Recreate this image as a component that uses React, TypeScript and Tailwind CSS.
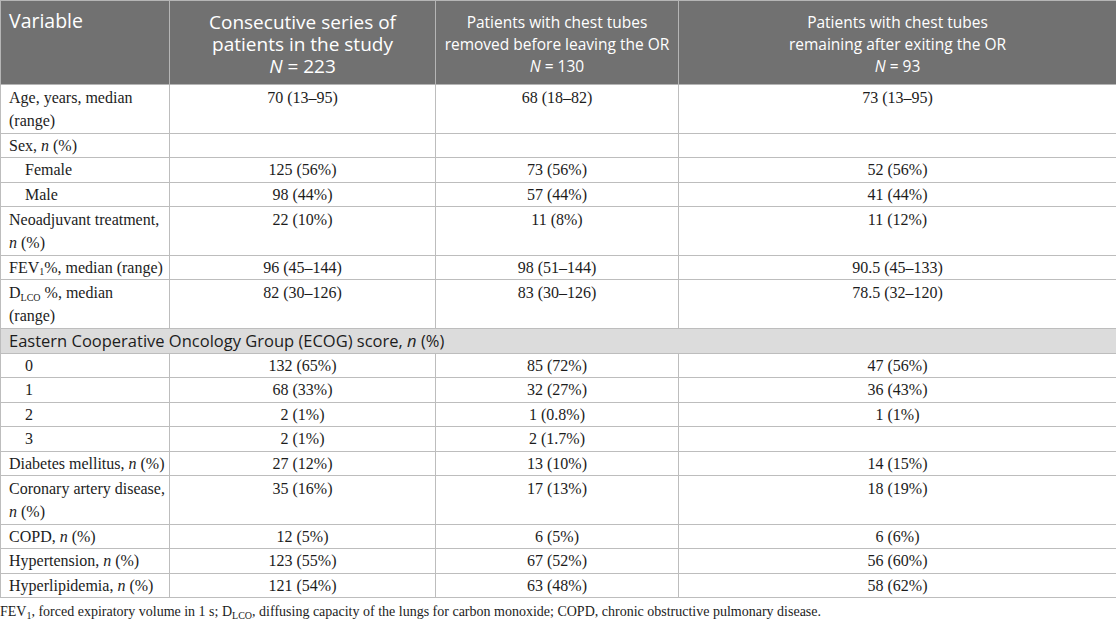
import React from "react";

type Row = {
  label: React.ReactNode;
  v: [string, string, string];
  indent?: boolean;
  double?: boolean;
};

const N = () => <i>n</i>;

const rows: Row[] = [
  { label: <>Age, years, median (range)</>, v: ["70 (13–95)", "68 (18–82)", "73 (13–95)"], double: true },
  { label: <>Sex, <N /> (%)</>, v: ["", "", ""] },
  { label: <>Female</>, v: ["125 (56%)", "73 (56%)", "52 (56%)"], indent: true },
  { label: <>Male</>, v: ["98 (44%)", "57 (44%)", "41 (44%)"], indent: true },
  { label: <>Neoadjuvant treatment, <N /> (%)</>, v: ["22 (10%)", "11 (8%)", "11 (12%)"], double: true },
  {
    label: (
      <>
        FEV<sub className="text-[10px]">1</sub>%, median (range)
      </>
    ),
    v: ["96 (45–144)", "98 (51–144)", "90.5 (45–133)"],
  },
  {
    label: (
      <>
        D<sub className="text-[10px]">LCO</sub> %, median
        <br />
        (range)
      </>
    ),
    v: ["82 (30–126)", "83 (30–126)", "78.5 (32–120)"],
    double: true,
  },
];

const rows2: Row[] = [
  { label: <>0</>, v: ["132 (65%)", "85 (72%)", "47 (56%)"], indent: true },
  { label: <>1</>, v: ["68 (33%)", "32 (27%)", "36 (43%)"], indent: true },
  { label: <>2</>, v: ["2 (1%)", "1 (0.8%)", "1 (1%)"], indent: true },
  { label: <>3</>, v: ["2 (1%)", "2 (1.7%)", ""], indent: true },
  { label: <>Diabetes mellitus, <N /> (%)</>, v: ["27 (12%)", "13 (10%)", "14 (15%)"] },
  { label: <>Coronary artery disease, <N /> (%)</>, v: ["35 (16%)", "17 (13%)", "18 (19%)"], double: true },
  { label: <>COPD, <N /> (%)</>, v: ["12 (5%)", "6 (5%)", "6 (6%)"] },
  { label: <>Hypertension, <N /> (%)</>, v: ["123 (55%)", "67 (52%)", "56 (60%)"] },
  { label: <>Hyperlipidemia, <N /> (%)</>, v: ["121 (54%)", "63 (48%)", "58 (62%)"] },
];

function BodyRow({ r }: { r: Row }) {
  const lead = r.double ? "leading-[23px]" : "leading-[22px]";
  return (
    <tr className={r.double ? "h-[48.7px]" : "h-[24.5px]"}>
      <td
        className={`border-[1.5px] border-[#bdbdbd] align-top pt-[1px] pb-0 pr-1 ${lead} ${
          r.indent ? "pl-[24px]" : "pl-[8px]"
        }`}
      >
        {r.label}
      </td>
      {r.v.map((x, i) => (
        <td
          key={i}
          className={`border-[1.5px] border-[#bdbdbd] align-top pt-[1px] pb-0 text-center ${lead}`}
        >
          {x}
        </td>
      ))}
    </tr>
  );
}

export default function App() {
  const head =
    "border-[1.5px] border-[#b5b5b5] align-top pt-[10px] text-center leading-[22px] font-normal whitespace-nowrap";
  return (
    <div className="w-[1116px] h-[627px] bg-white overflow-hidden">
      <table
        className="w-[1116px] table-fixed border-collapse text-[16px] text-[#1c1c1c]"
        style={{ fontFamily: '"Liberation Serif", "Times New Roman", serif' }}
      >
        <colgroup>
          <col className="w-[169px]" />
          <col className="w-[266px]" />
          <col className="w-[243px]" />
          <col className="w-[438px]" />
        </colgroup>
        <thead>
          <tr
            className="h-[84px] bg-[#717171] text-white"
            style={{ fontFamily: '"Open Sans", "Noto Sans", sans-serif' }}
          >
            <th className="border-[1.5px] border-[#b5b5b5] align-top pt-[9px] pl-[8px] text-left font-normal leading-[22px] text-[19.5px]">
              Variable
            </th>
            <th className={`${head} text-[19px]`}>
              Consecutive series of
              <br />
              patients in the study
              <br />
              <i>N</i> = 223
            </th>
            <th className={`${head} text-[15.5px]`}>
              Patients with chest tubes
              <br />
              removed before leaving the OR
              <br />
              <i>N</i> = 130
            </th>
            <th className={`${head} text-[15.5px]`}>
              Patients with chest tubes
              <br />
              remaining after exiting the OR
              <br />
              <i>N</i> = 93
            </th>
          </tr>
        </thead>
        <tbody>
          {rows.map((r, i) => (
            <BodyRow key={i} r={r} />
          ))}
          <tr className="h-[24.5px] bg-[#dcdcdc]">
            <td
              colSpan={4}
              className="border-[1.5px] border-[#bdbdbd] pl-[8px] align-middle text-[16.5px] leading-[22px]"
              style={{ fontFamily: '"Open Sans", "Noto Sans", sans-serif' }}
            >
              Eastern Cooperative Oncology Group (ECOG) score, <i>n</i> (%)
            </td>
          </tr>
          {rows2.map((r, i) => (
            <BodyRow key={i} r={r} />
          ))}
        </tbody>
      </table>
      <p
        className="mt-[4px] text-[14px] leading-[20px] text-[#1c1c1c]"
        style={{ fontFamily: '"Liberation Serif", "Times New Roman", serif' }}
      >
        FEV<sub className="text-[10px]">1</sub>, forced expiratory volume in 1 s; D
        <sub className="text-[10px]">LCO</sub>, diffusing capacity of the lungs for carbon monoxide; COPD,
        chronic obstructive pulmonary disease.
      </p>
    </div>
  );
}
